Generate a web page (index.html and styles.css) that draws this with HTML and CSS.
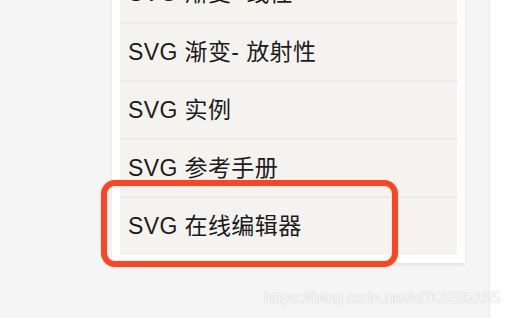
FILE: index.html
```html
<!DOCTYPE html>
<html lang="zh-CN">
<head>
    <meta charset="UTF-8">
    <meta name="viewport" content="width=device-width, initial-scale=1.0">
    <title>SVG 教程</title>
    <link rel="stylesheet" href="styles.css">
</head>
<body>

<div class="page">
    <div class="panel">
        <ul class="menu">
            <li>SVG 渐变- 线性</li>
            <li>SVG 渐变- 放射性</li>
            <li>SVG 实例</li>
            <li>SVG 参考手册</li>
            <li>SVG 在线编辑器</li>
        </ul>
    </div>
</div>

<div class="highlight"></div>
<div class="watermark">https://blog.csdn.net/u013205165</div>

</body>
</html>
```

FILE: styles.css
```css
body {
    margin: 0;
    background: #fff;
    font-family: "Liberation Sans", "Noto Sans CJK SC", sans-serif;
    overflow: hidden;
}
.page {
    width: 490px;
    height: 318px;
    background: #f5f5f5;
    border-right: 1px solid #ebebeb;
    padding-left: 112px;
    box-sizing: border-box;
    overflow: hidden;
}
.panel {
    width: 353px;
    margin-top: -36px;
    padding: 0 8px 8px;
    box-sizing: border-box;
    background: #fff;
    box-shadow: 0 2px 3px rgba(0, 0, 0, 0.08);
}
.menu {
    list-style: none;
    margin: 0;
    padding: 0;
    background: #f4f3f0;
}
.menu li {
    height: 56px;
    line-height: 56px;
    padding-left: 8px;
    font-size: 23px;
    letter-spacing: 0.4px;
    color: #1b1b1b;
    border-top: 2px solid #ebeaec;
}
.menu li:first-child {
    border-top: none;
    height: 58px;
    line-height: 58px;
}
.menu li:last-child {
    height: 57px;
    line-height: 57px;
}
.highlight {
    position: absolute;
    left: 101px;
    top: 180px;
    width: 297px;
    height: 87px;
    box-sizing: border-box;
    border: 6px solid #fe4421;
    border-radius: 14px;
}
.watermark {
    position: absolute;
    left: 264px;
    top: 289px;
    font-size: 16px;
    color: #fff;
    text-shadow: 0 0 1px rgba(0, 0, 0, 0.35);
    white-space: nowrap;
}
```
